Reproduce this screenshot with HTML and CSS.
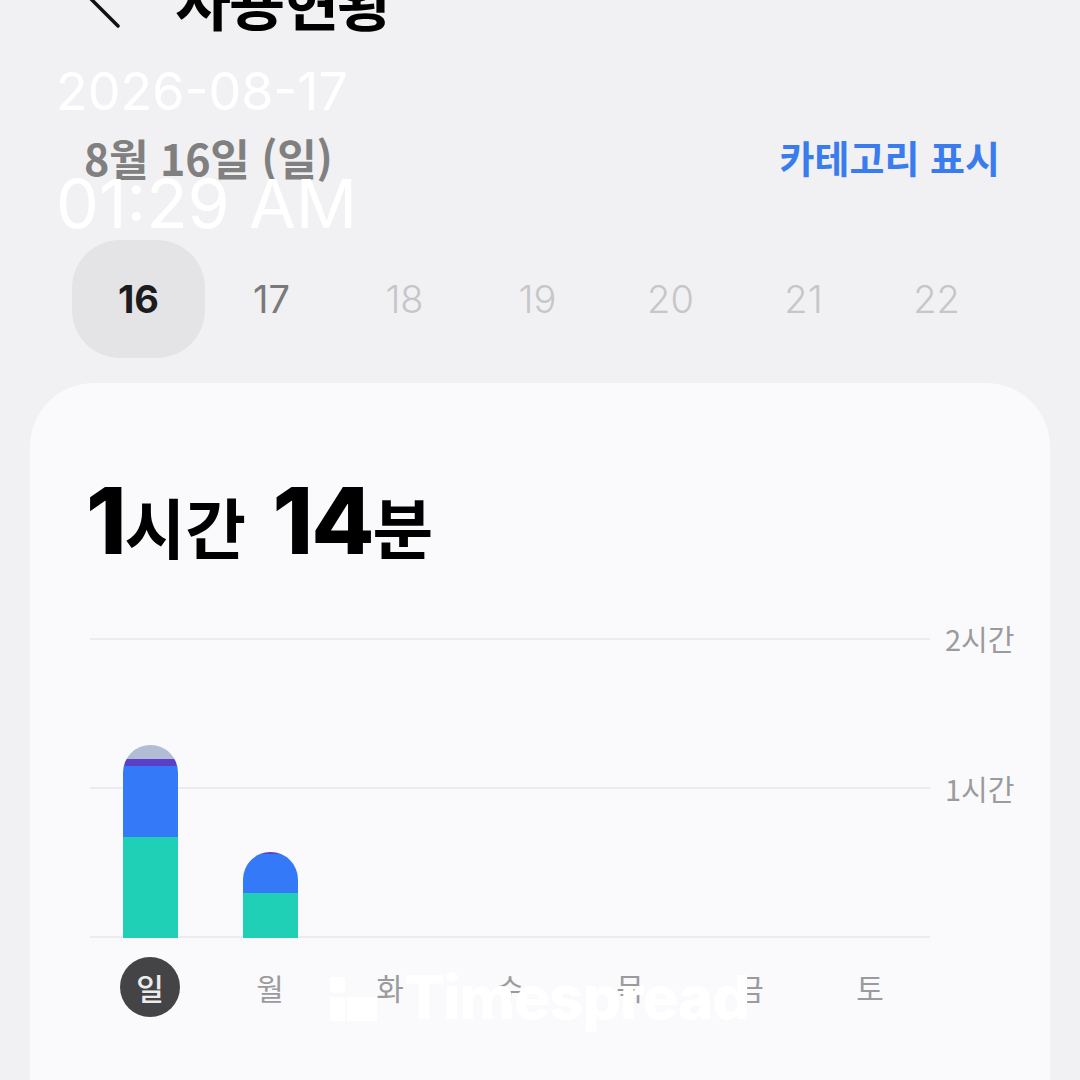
FILE: index.html
```html
<!DOCTYPE html>
<html lang="ko">
<head>
<meta charset="utf-8">
<title>사용현황</title>
<link rel="stylesheet" href="styles.css">
</head>
<body>
  <header class="topbar">
    <svg class="back" width="40" height="60" viewBox="0 0 40 60">
      <polyline points="38,-8 6,24 38,56" fill="none" stroke="#111" stroke-width="3.5" stroke-linecap="round" stroke-linejoin="round"/>
    </svg>
    <h1 class="title">사용현황</h1>
  </header>

  <div class="subbar">
    <span class="date-label">8월 16일 (일)</span>
    <span class="cat-link">카테고리 표시</span>
  </div>

  <nav class="days">
    <div class="day selected">16</div>
    <div class="day near">17</div>
    <div class="day">18</div>
    <div class="day">19</div>
    <div class="day">20</div>
    <div class="day">21</div>
    <div class="day">22</div>
  </nav>

  <section class="card">
    <div class="total"><span class="num">1</span><span class="unit">시간</span> <span class="num">14</span><span class="unit">분</span></div>

    <div class="chart">
      <div class="plot">
        <div class="col">
          <div class="bar" style="height:193px">
            <div class="seg other" style="height:14px"></div>
            <div class="seg purple" style="height:7px"></div>
            <div class="seg blue" style="height:71px"></div>
            <div class="seg teal" style="height:101px"></div>
          </div>
        </div>
        <div class="col">
          <div class="bar" style="height:86px">
            <div class="seg purple" style="height:2px"></div>
            <div class="seg blue" style="height:39px"></div>
            <div class="seg teal" style="height:45px"></div>
          </div>
        </div>
        <div class="col"></div>
        <div class="col"></div>
        <div class="col"></div>
        <div class="col"></div>
        <div class="col"></div>
      </div>
      <div class="axis">
        <span class="tick first">2시간</span>
        <span class="tick">1시간</span>
      </div>
    </div>

    <div class="weekdays">
      <span class="wd active"><span class="dot">일</span></span>
      <span class="wd">월</span>
      <span class="wd">화</span>
      <span class="wd">수</span>
      <span class="wd">목</span>
      <span class="wd">금</span>
      <span class="wd">토</span>
    </div>
  </section>

  <div class="stamp-date">2026-08-17</div>
  <div class="stamp-time">01:29 AM</div>

  <div class="watermark">
    <svg class="wm-icon" width="48" height="46" viewBox="0 0 48 46">
      <rect x="0" y="2" width="15" height="16" rx="3" fill="#fff"/>
      <rect x="0" y="22" width="15" height="24" fill="#fff"/>
      <rect x="17" y="22" width="30" height="24" fill="#fff"/>
    </svg>
    <span class="wm-text">Timespread</span>
  </div>
</body>
</html>
```

FILE: styles.css
```css
* {
  box-sizing: border-box;
  margin: 0;
  padding: 0;
}

html, body {
  width: 1080px;
  height: 1080px;
  overflow: hidden;
}

body {
  position: relative;
  background: #f1f1f3;
  font-family: "Noto Sans CJK KR", "Inter", sans-serif;
  color: #111;
}

/* top bar */
.topbar {
  display: flex;
  align-items: center;
  height: 60px;
  margin-top: -30px;
  padding-left: 80px;
}

.back {
  overflow: visible;
  flex: none;
  margin-top: 0;
}

.title {
  margin-left: 55px;
  font-size: 61px;
  line-height: 60px;
  font-weight: 700;
  color: #000;
  letter-spacing: -2px;
}

/* sub bar */
.subbar {
  display: flex;
  justify-content: space-between;
  align-items: center;
  height: 50px;
  margin-top: 102px;
  padding: 0 80px 0 84px;
}

.date-label {
  font-size: 43px;
  line-height: 50px;
  font-weight: 700;
  color: #808080;
  letter-spacing: -0.3px;
}

.cat-link {
  font-size: 38px;
  line-height: 50px;
  font-weight: 700;
  color: #3a7cee;
}

/* day selector */
.days {
  display: flex;
  margin-top: 58px;
  padding-left: 72px;
}

.day {
  width: 133px;
  height: 118px;
  display: flex;
  align-items: center;
  justify-content: center;
  font-family: "Inter", sans-serif;
  font-size: 38px;
  font-weight: 300;
  color: #c6c6c8;
}

.day.near {
  color: #7a7a7c;
  font-weight: 400;
}

.day.selected {
  background: #e4e4e6;
  border-radius: 48px;
  color: #1c1c1e;
  font-weight: 700;
}

/* card */
.card {
  margin: 25px 30px 0;
  height: 697px;
  background: #fafafc;
  border-radius: 64px 64px 0 0;
  padding-top: 88px;
}

.total {
  padding-left: 56px;
  height: 100px;
  line-height: 100px;
  font-size: 66px;
  font-weight: 700;
  color: #000;
  white-space: nowrap;
  word-spacing: 8px;
}

.total .num {
  font-family: "Inter", sans-serif;
  font-size: 92px;
  font-weight: 800;
  letter-spacing: -2px;
}

.total .unit {
  font-size: 66px;
  letter-spacing: 0;
}

/* chart */
.chart {
  display: flex;
  margin-top: 67px;
  padding-left: 60px;
}

.plot {
  display: flex;
  align-items: flex-end;
  width: 840px;
  height: 300px;
  background:
    linear-gradient(#ececef, #ececef) 0 0 / 100% 2px no-repeat,
    linear-gradient(#ececef, #ececef) 0 149px / 100% 2px no-repeat,
    linear-gradient(#ececef, #ececef) 0 298px / 100% 2px no-repeat;
}

.col {
  width: 120px;
  height: 299px;
  display: flex;
  align-items: flex-end;
  justify-content: center;
}

.bar {
  width: 55px;
  display: flex;
  flex-direction: column;
  border-radius: 27.5px 27.5px 0 0;
  overflow: hidden;
}

.seg { width: 100%; flex: none; }
.seg.other { background: #b1bdd5; }
.seg.purple { background: #5a3fc8; }
.seg.blue { background: #3479f7; }
.seg.teal { background: #1fcfb6; }

.axis {
  display: flex;
  flex-direction: column;
  padding-left: 15px;
}

.tick {
  font-size: 29px;
  line-height: 30px;
  color: #9b9b9d;
}

.tick.first {
  margin-top: -15px;
  margin-bottom: 120px;
}

/* weekdays */
.weekdays {
  display: flex;
  margin-top: 19px;
  padding-left: 60px;
}

.wd {
  width: 120px;
  height: 60px;
  display: flex;
  align-items: center;
  justify-content: center;
  font-size: 30px;
  color: #9b9b9d;
}

.dot {
  width: 60px;
  height: 60px;
  border-radius: 50%;
  background: #444446;
  color: #ececec;
  display: flex;
  align-items: center;
  justify-content: center;
  font-weight: 500;
}

/* overlay stamps */
.stamp-date,
.stamp-time {
  position: absolute;
  left: 56px;
  font-family: "Inter", sans-serif;
  color: #fff;
  line-height: 1;
  font-weight: 400;
}

.stamp-date {
  top: 66px;
  font-size: 52px;
}

.stamp-time {
  top: 169px;
  font-size: 68px;
}

.watermark {
  position: absolute;
  left: 330px;
  top: 967px;
  display: flex;
  align-items: flex-start;
  gap: 26px;
}

.wm-icon {
  margin-top: 8px;
}

.wm-text {
  font-family: "Inter", sans-serif;
  font-size: 60px;
  font-weight: 800;
  line-height: 1;
  color: #fff;
  letter-spacing: -1px;
}
```
